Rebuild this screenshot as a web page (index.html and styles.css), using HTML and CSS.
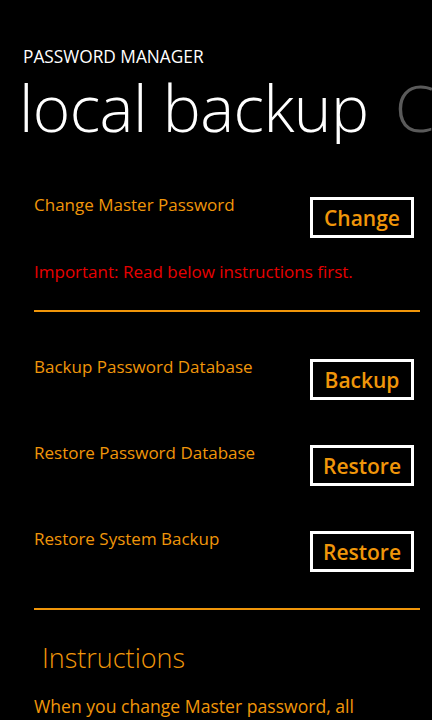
FILE: index.html
```html
<!DOCTYPE html>
<html lang="en">
<head>
  <meta charset="UTF-8" />
  <meta name="viewport" content="width=device-width, initial-scale=1.0" />
  <title>Password Manager - local backup</title>
  <link rel="stylesheet" href="styles.css">
</head>
<body>
  <div class="app-title">PASSWORD MANAGER</div>
  <div class="pivot">
    <span class="pivot-item active">local backup</span>
    <span class="pivot-item">Cloud</span>
  </div>

  <div class="content">
    <div class="row first">
      <div class="label">Change Master Password</div>
      <button class="btn">Change</button>
    </div>
    <div class="warning">Important: Read below instructions first.</div>
    <hr class="sep top">

    <div class="row">
      <div class="label">Backup Password Database</div>
      <button class="btn">Backup</button>
    </div>
    <div class="row">
      <div class="label">Restore Password Database</div>
      <button class="btn">Restore</button>
    </div>
    <div class="row">
      <div class="label">Restore System Backup</div>
      <button class="btn">Restore</button>
    </div>
    <hr class="sep bottom">

    <h3 class="instr-title">Instructions</h3>
    <p class="instr">When you change Master password, all existing backups become invalid.</p>
  </div>
</body>
</html>
```

FILE: styles.css
```css
body {
  margin: 0;
  background-color: #000;
  color: #fff;
  font-family: "Open Sans", "DejaVu Sans", sans-serif;
  width: 432px;
  height: 720px;
  overflow: hidden;
}
.app-title {
  padding: 45px 0 0 23px;
  font-size: 17.3px;
  line-height: 24px;
}
.pivot {
  white-space: nowrap;
  overflow: hidden;
  padding-left: 19px;
  margin-top: 3px;
  height: 72px;
}
.pivot-item {
  font-size: 64px;
  font-weight: 300;
  line-height: 72px;
  letter-spacing: -0.6px;
  color: #5a5a5a;
  margin-right: 22px;
}
.pivot-item.active { color: #fff; }
.content {
  padding: 0 18px 0 34px;
  color: #f0960a;
}
.row {
  display: flex;
  justify-content: space-between;
  align-items: flex-start;
  height: 86px;
}
.row.first { margin-top: 50px; height: 67px; }
.label {
  font-size: 17px;
  line-height: 22px;
}
.btn {
  width: 104px;
  height: 41px;
  margin-top: 3px;
  background: #000;
  border: 3px solid #fff;
  color: #f0960a;
  font-family: inherit;
  font-size: 21px;
  font-weight: 600;
  padding: 0;
}
.warning {
  color: #e80000;
  font-size: 17px;
  line-height: 22px;
}
.sep {
  border: none;
  border-top: 2px solid #f0960a;
  margin: 0;
}
.sep.top { margin: 27px -6px 44px 0; }
.sep.bottom { margin: -6px -6px 30px 0; }
.instr-title {
  font-size: 27px;
  font-weight: 300;
  margin: 0 0 0 8px;
  line-height: 36px;
}
.instr {
  font-size: 17.6px;
  line-height: 24px;
  margin: 18px 0 0 0;
  width: 360px;
}
```
